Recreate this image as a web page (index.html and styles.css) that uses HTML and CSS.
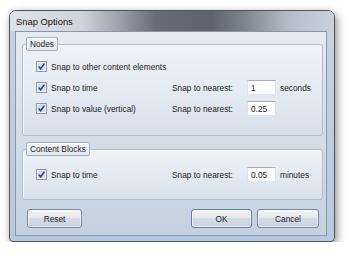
FILE: index.html
```html
<!DOCTYPE html>
<html lang="en">
<head>
    <meta charset="UTF-8">
    <link rel="stylesheet" href="styles.css">
    <title>Snap Options</title>
</head>
<body>
    <div class="window">
        <div class="titlebar">Snap Options</div>
        <div class="client">
            <fieldset class="group nodes">
                <legend>Nodes</legend>
                <div class="grid">
                    <label class="check wide">
                        <svg class="box" width="11" height="11" viewBox="0 0 11 11"><rect x="0.5" y="0.5" width="10" height="10" fill="#eef1f5" stroke="#8c98a7"/><rect x="2" y="2" width="7" height="7" fill="#d5dce5"/><path d="M2.6 5.6 L4.6 7.8 L8.4 2.6" fill="none" stroke="#213f80" stroke-width="1.5"/></svg>
                        Snap to other content elements
                    </label>
                    <label class="check">
                        <svg class="box" width="11" height="11" viewBox="0 0 11 11"><rect x="0.5" y="0.5" width="10" height="10" fill="#eef1f5" stroke="#8c98a7"/><rect x="2" y="2" width="7" height="7" fill="#d5dce5"/><path d="M2.6 5.6 L4.6 7.8 L8.4 2.6" fill="none" stroke="#213f80" stroke-width="1.5"/></svg>
                        Snap to time
                    </label>
                    <span class="near">Snap to nearest:</span>
                    <input class="num" type="text" value="1">
                    <span class="unit">seconds</span>

                    <label class="check">
                        <svg class="box" width="11" height="11" viewBox="0 0 11 11"><rect x="0.5" y="0.5" width="10" height="10" fill="#eef1f5" stroke="#8c98a7"/><rect x="2" y="2" width="7" height="7" fill="#d5dce5"/><path d="M2.6 5.6 L4.6 7.8 L8.4 2.6" fill="none" stroke="#213f80" stroke-width="1.5"/></svg>
                        Snap to value (vertical)
                    </label>
                    <span class="near">Snap to nearest:</span>
                    <input class="num" type="text" value="0.25">
                    <span class="unit"></span>
                </div>
            </fieldset>

            <fieldset class="group blocks">
                <legend>Content Blocks</legend>
                <div class="grid">
                    <label class="check">
                        <svg class="box" width="11" height="11" viewBox="0 0 11 11"><rect x="0.5" y="0.5" width="10" height="10" fill="#eef1f5" stroke="#8c98a7"/><rect x="2" y="2" width="7" height="7" fill="#d5dce5"/><path d="M2.6 5.6 L4.6 7.8 L8.4 2.6" fill="none" stroke="#213f80" stroke-width="1.5"/></svg>
                        Snap to time
                    </label>
                    <span class="near">Snap to nearest:</span>
                    <input class="num" type="text" value="0.05">
                    <span class="unit">minutes</span>
                </div>
            </fieldset>

            <div class="buttons">
                <button type="button" class="reset">Reset</button>
                <button type="button" class="ok">OK</button>
                <button type="button" class="cancel">Cancel</button>
            </div>
        </div>
    </div>
</body>
</html>
```

FILE: styles.css
```css
body {
    margin: 0;
    padding: 0;
    background-color: #ffffff;
    font-family: 'Liberation Sans', Arial, sans-serif;
    font-size: 8.3px;
    color: #1b1b1b;
}

.window {
    margin: 10px 0 0 9px;
    width: 326px;
    height: 232px;
    box-sizing: border-box;
    border: 1px solid #4b5562;
    border-radius: 7px 7px 4px 4px;
    background: linear-gradient(180deg, #c9d4e0 0%, #bccde0 60%, #b6c9de 100%);
    box-shadow: 2px 3px 9px rgba(0, 0, 0, 0.45);
    display: flex;
    flex-direction: column;
    overflow: hidden;
}

.titlebar {
    height: 20px;
    padding-left: 6px;
    display: flex;
    align-items: center;
    font-size: 9.4px;
    color: #151515;
    background: linear-gradient(90deg, #dfe3e8 0%, #cfd5dc 22%, #9aa1aa 34%, #666d77 45%, #5d646e 62%, #7b838d 72%, #b5bec8 86%, #c8d2dd 100%);
}

.client {
    margin: 0 7px 0 5px;
    height: 205px;
    box-sizing: border-box;
    border: 1px solid #8796a9;
    background: linear-gradient(180deg, #e6ebf1 0%, #d6dfe9 45%, #c4d1e0 100%);
    padding: 5px 3px 0 6px;
    display: flex;
    flex-direction: column;
}

.group {
    margin: 0;
    min-inline-size: 0;
    border: 1px solid #aebdcd;
    border-radius: 3px;
    box-shadow: inset 1px 1px 0 rgba(255, 255, 255, 0.7);
    background: linear-gradient(180deg, #eff3f7 0%, #e2e9f1 60%, #d6dfea 100%);
}

.group legend {
    padding: 0 3px;
    height: 12px;
    line-height: 12px;
    border: 1px solid #9fb0c3;
    border-radius: 2px;
    background: linear-gradient(180deg, #f3f6f9, #e3e9f0);
    box-shadow: inset 1px 1px 0 #ffffff;
    color: #1b1b1b;
}

.nodes {
    padding: 8px 0 19px 3px;
}

.blocks {
    margin-top: 6px;
    padding: 11px 0 17px 3px;
}

.grid {
    margin-left: 10px;
    display: grid;
    grid-template-columns: 136px 75px 29px auto;
    grid-auto-rows: 15px;
    row-gap: 6px;
    align-items: center;
}

.check {
    display: flex;
    align-items: center;
    gap: 4px;
}

.check.wide {
    grid-column: 1 / -1;
}

.box {
    flex: none;
}

.num {
    width: 29px;
    height: 15px;
    box-sizing: border-box;
    margin: 0;
    padding: 0 3px;
    border: 1px solid #dde3ea;
    border-top-color: #abadb3;
    background: #ffffff;
    font-family: 'Liberation Sans', Arial, sans-serif;
    font-size: 8.3px;
    color: #1b1b1b;
}

.unit {
    margin-left: 4px;
}

.buttons {
    margin-top: 9px;
    padding: 0 4px 0 5px;
    display: flex;
    gap: 5px;
}

.buttons button {
    height: 19px;
    margin: 0;
    padding: 0;
    border: 1px solid #7d8896;
    border-radius: 3px;
    background: linear-gradient(180deg, #f1f3f6 0%, #e4e9ee 45%, #d4dbe4 50%, #c9d2dd 100%);
    box-shadow: inset 0 0 0 1px rgba(255, 255, 255, 0.6);
    font-family: 'Liberation Sans', Arial, sans-serif;
    font-size: 8.3px;
    color: #1b1b1b;
}

.reset {
    width: 55px;
    margin-right: auto !important;
}

.ok {
    width: 61px;
    border-color: #5e7fa6 !important;
}

.cancel {
    width: 62px;
}
```
